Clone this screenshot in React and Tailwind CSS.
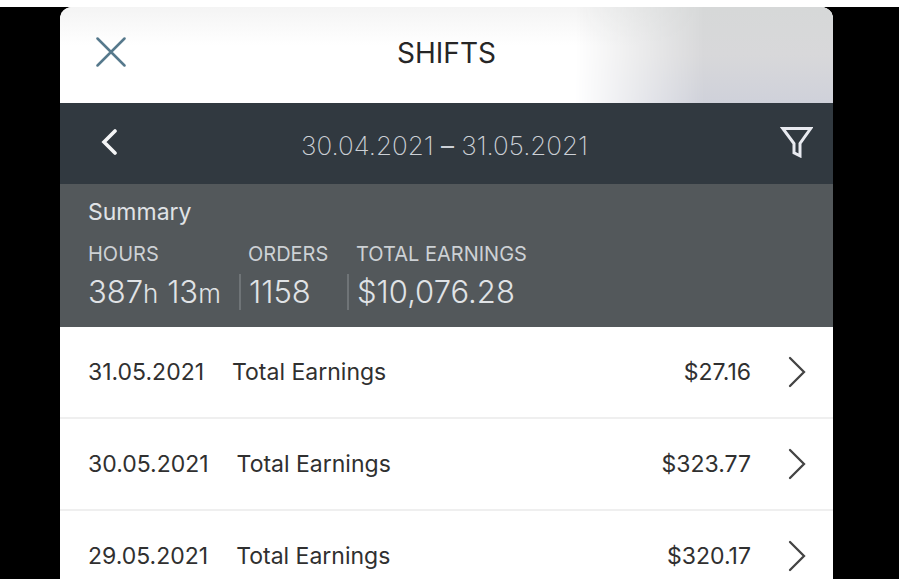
const shifts = [
    { date: "31.05.2021", amount: "$27.16" },
    { date: "30.05.2021", amount: "$323.77" },
    { date: "29.05.2021", amount: "$320.17" },
];

// Title bar with the close button
const Header = () => {
    return (
        <header className="relative flex h-24 items-center justify-center bg-linear-to-b from-[#f4f4f4] to-white to-40% pb-1">
            <div className="absolute inset-y-0 right-0 w-1/3 bg-linear-to-b from-[#d6d8d8] via-[#d8d8da] to-[#cfd1da] mask-l-from-50% mask-l-to-100%"></div>
            <button aria-label="Close" className="absolute left-9 top-[30px]">
                <svg className="h-[30px] w-[30px]" viewBox="0 0 30 30" fill="none" stroke="#56798c" strokeWidth="2.5" strokeLinecap="round">
                    <path d="M1.5 1.5L28.5 28.5M28.5 1.5L1.5 28.5" />
                </svg>
            </button>
            <h1 className="relative text-[28px] leading-8 text-[#262626]">SHIFTS</h1>
        </header>
    );
};

const DateBar = () => {
    return (
        <div className="flex h-[81px] items-center bg-[#313940] pl-10 pr-5">
            <div className="flex flex-1 pb-1">
                <button aria-label="Previous period">
                    <svg className="h-[26px] w-[18px]" viewBox="0 0 18 26" fill="none" stroke="#f4f5f6" strokeWidth="3.6" strokeLinecap="round" strokeLinejoin="miter">
                        <path d="M15 2L4 13L15 24" />
                    </svg>
                </button>
            </div>
            <p className="mr-6 pt-1 text-[26px] font-extralight leading-8 text-[#ccd0d6]">
                30.04.2021 <span className="font-normal">–</span> 31.05.2021
            </p>
            <div className="flex flex-1 justify-end pb-1">
                <button aria-label="Filter">
                    <svg className="h-8 w-[34px]" viewBox="0 0 34 32" fill="none" stroke="#e8eaf0" strokeWidth="3" strokeLinejoin="miter">
                        <path d="M3.8 2.5H31.6L21 17.5V29.8L15 26.8V17.5Z" />
                    </svg>
                </button>
            </div>
        </div>
    );
};

const Summary = () => {
    return (
        <section className="h-[143px] bg-[#53585b] px-7 pt-3 text-[#e0e3e6]">
            <h2 className="text-[23px] leading-8">Summary</h2>
            <dl className="flex pt-3">
                <div className="w-[151px]">
                    <dt className="text-[20px] leading-7 text-[#cdd1d5]">HOURS</dt>
                    <dd className="pt-1.5 text-[31px] font-light leading-9">
                        387<span className="text-[26px]">h</span> 13<span className="text-[26px]">m</span>
                    </dd>
                </div>
                <div className="w-[108px]">
                    <dt className="pl-[9px] text-[20px] leading-7 text-[#cdd1d5]">ORDERS</dt>
                    <dd className="mt-1.5 border-l-2 border-[#6f7477] pl-2 text-[31px] font-light leading-9">1158</dd>
                </div>
                <div>
                    <dt className="pl-[9px] text-[20px] leading-7 text-[#cdd1d5]">TOTAL EARNINGS</dt>
                    <dd className="mt-1.5 border-l-2 border-[#6f7477] pl-2 text-[31px] font-light leading-9">$10,076.28</dd>
                </div>
            </dl>
        </section>
    );
};

// One day in the list
const ShiftRow = ({ date, amount }) => {
    return (
        <li className="border-b-2 border-[#efefef]">
            <button className="flex h-[90px] w-full items-center pl-7 pr-[26px] text-left text-[23px] leading-8 text-[#303030]">
                <span>{date}</span>
                <span className="ml-7">Total Earnings</span>
                <span className="ml-auto">{amount}</span>
                <svg className="ml-9 h-8 w-5" viewBox="0 0 20 32" fill="none" stroke="#444444" strokeWidth="2.3" strokeLinecap="round">
                    <path d="M3 2L17 16L3 30" />
                </svg>
            </button>
        </li>
    );
};

const App = () => {
    return (
        <div className="h-screen overflow-hidden bg-white pt-[7px] pr-[3px] font-['Inter',sans-serif]">
            <div className="min-h-full bg-black pl-[60px] pr-[66px]">
                <main className="overflow-hidden rounded-t-xl bg-white">
                    <Header />
                    <DateBar />
                    <Summary />
                    <ul>
                        {shifts.map((shift) => (
                            <ShiftRow key={shift.date} date={shift.date} amount={shift.amount} />
                        ))}
                    </ul>
                </main>
            </div>
        </div>
    );
};

export default App;
